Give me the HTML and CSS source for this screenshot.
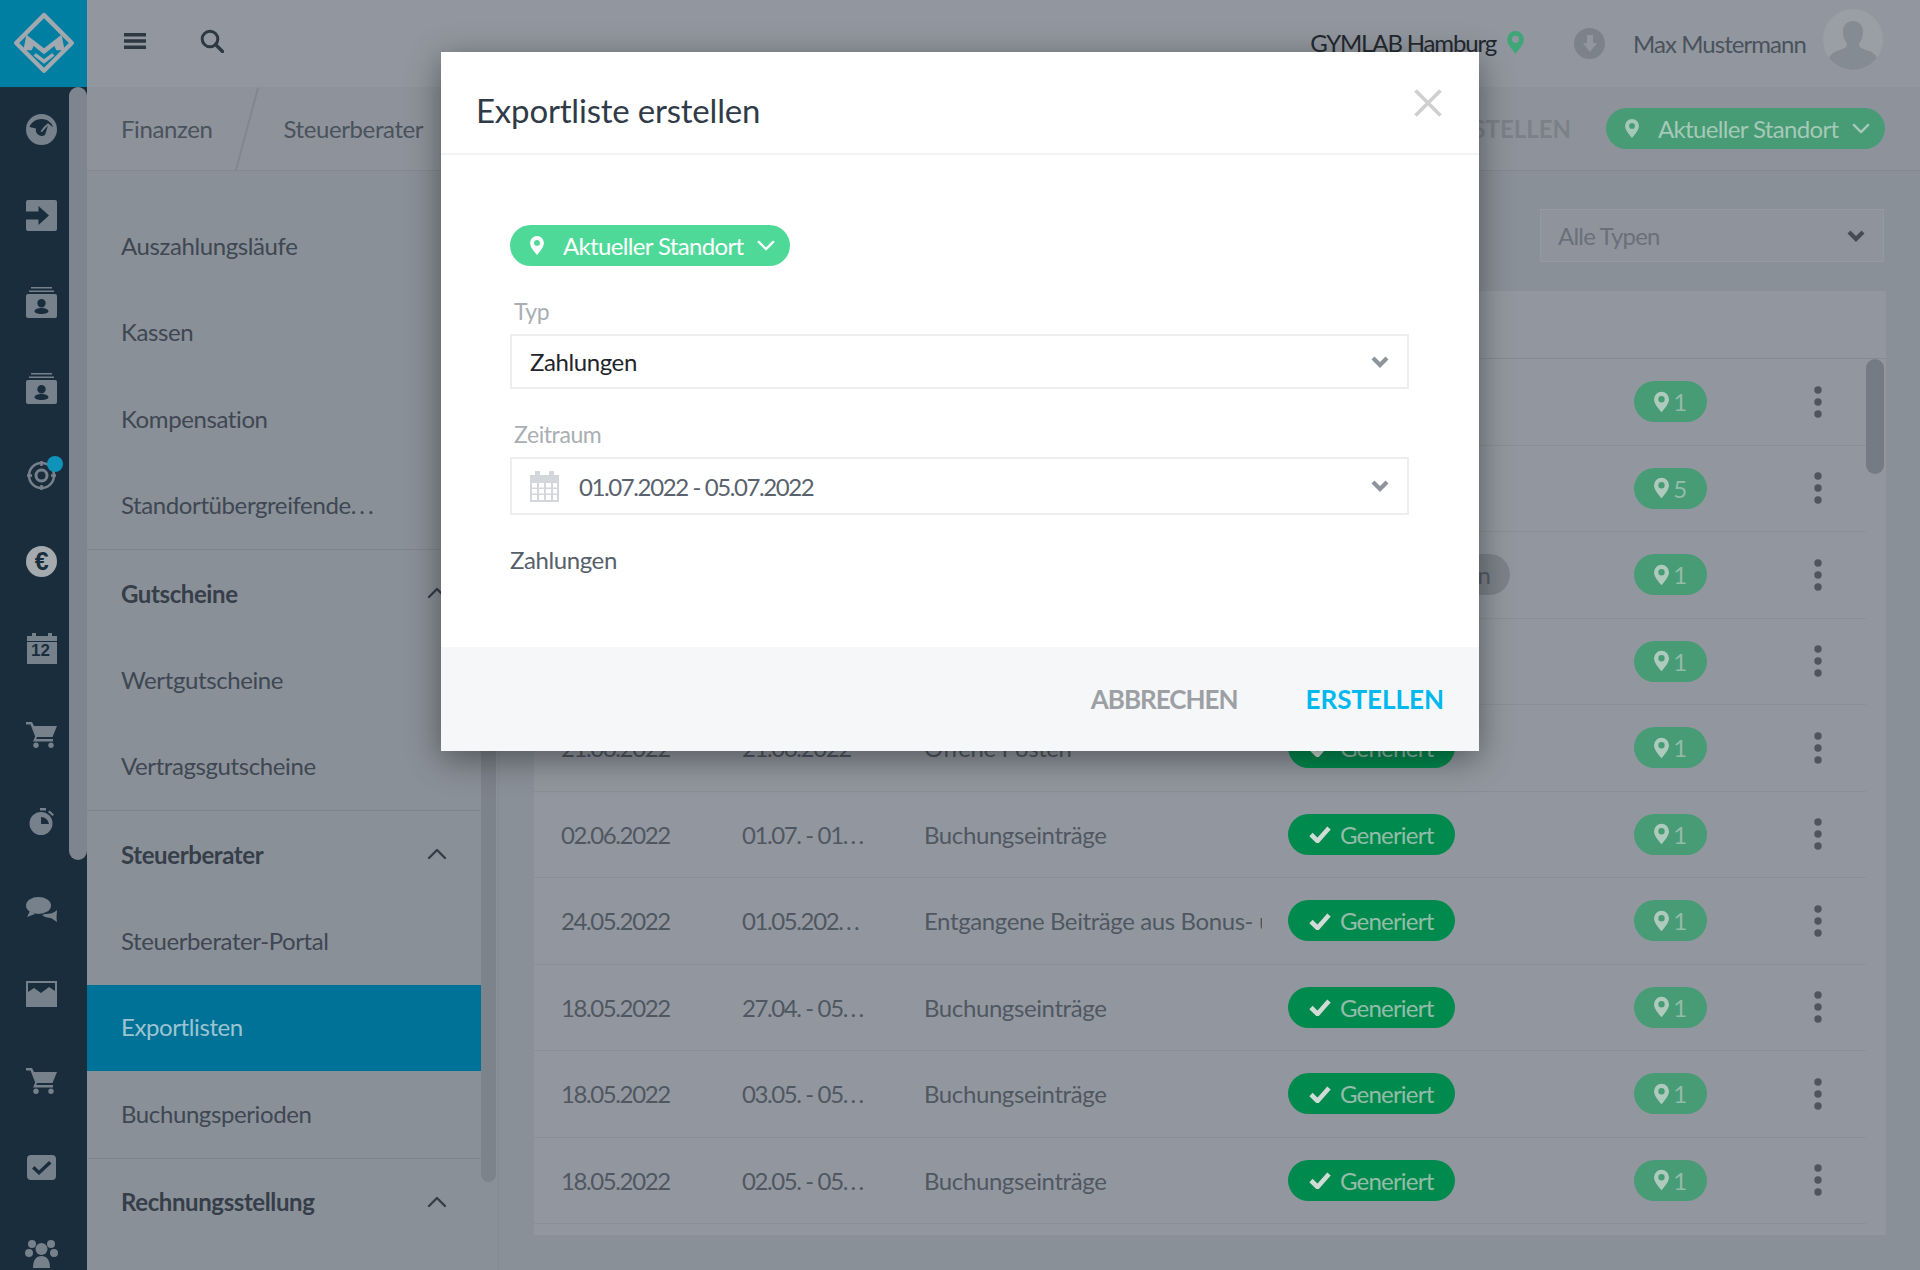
FILE: index.html
```html
<!DOCTYPE html>
<html lang="de">
<head>
<meta charset="utf-8">
<title>Exportliste erstellen</title>
<link rel="stylesheet" href="styles.css">
</head>
<body>
<svg class="defs" width="0" height="0" aria-hidden="true">
  <symbol id="pin" viewBox="0 0 16 22"><path fill-rule="evenodd" d="M8 0a8 8 0 0 1 8 8c0 5-5 10-8 14C5 18 0 13 0 8a8 8 0 0 1 8-8zm0 4.600a3.400 3.400 0 1 0 0 6.800 3.400 3.400 0 0 0 0-6.800z"/></symbol>
  <symbol id="chev" viewBox="0 0 20 12"><path d="M2 2l8 8 8-8" fill="none" stroke="currentColor" stroke-width="2.600" stroke-linecap="round" stroke-linejoin="round"/></symbol>
  <symbol id="chevb" viewBox="0 0 20 14"><path d="M3 3l7 7 7-7" fill="none" stroke="currentColor" stroke-width="4.200"/></symbol>
  <symbol id="up" viewBox="0 0 20 12"><path d="M2 10l8-8 8 8" fill="none" stroke="currentColor" stroke-width="2.400" stroke-linecap="round" stroke-linejoin="round"/></symbol>
  <symbol id="check" viewBox="0 0 22 18"><path d="M2 9.500l6.500 6.500L20 3" fill="none" stroke="currentColor" stroke-width="4.600"/></symbol>
  <symbol id="dots" viewBox="0 0 8 32"><circle cx="4" cy="4" r="3.700"/><circle cx="4" cy="16" r="3.700"/><circle cx="4" cy="28" r="3.700"/></symbol>
  <symbol id="boxperson" viewBox="0 0 31 31"><path d="M5 0h21v1.500H5zM3 3.500h25V5H3z"/><path fill-rule="evenodd" d="M2 7h27a2 2 0 0 1 2 2v20a2 2 0 0 1-2 2H2a2 2 0 0 1-2-2V9a2 2 0 0 1 2-2zm13.500 5a4.200 4.200 0 1 0 0 8.400 4.200 4.200 0 0 0 0-8.400zM15.500 21c-4 0-7 1.500-7 3.300 0 1.500 3 2.700 7 2.700s7-1.200 7-2.700c0-1.800-3-3.300-7-3.300z"/></symbol>
  <symbol id="cart" viewBox="0 0 31 26"><path d="M0 0h6l2 4h23l-4.500 11H11l-.8 2H27v2.500H7l2.200-5L4.500 2.500H0z"/><circle cx="10" cy="23.300" r="2.700"/><circle cx="25" cy="23.300" r="2.700"/></symbol>
</svg>

<div class="page">
  <nav class="rail">
    <div class="logo">
      <svg width="64" height="64" viewBox="0 0 62 62"><path d="M31 3l27 27-27 27L4 30z" fill="none" stroke="#a2a9ae" stroke-width="4.200" stroke-linejoin="round"/><path d="M14 22l17 13 17-13 3 15h-8l-2-4-10 8-10-8-2 4h-8z" fill="#a2a9ae"/><path d="M22 41l9 7 9-7" fill="none" stroke="#a2a9ae" stroke-width="3.500"/></svg>
    </div>
    <div class="rail-thumb"></div>
    <ul class="rail-list">
      <li><svg class="ic" width="31" height="31" viewBox="0 0 31 31"><path fill-rule="evenodd" d="M15.500 0a15.500 15.500 0 1 1 0 31 15.500 15.500 0 0 1 0-31zm0 5C9 5 4.500 9.500 3.500 13l6.500 1.500a6 6 0 0 0 9 6.500l3-9.500-6 6.500a3 3 0 0 0-1.500-.3c1.500-3 4-6 7.500-8.500l5 4C26 9.500 22 5 15.500 5z"/></svg></li>
      <li><svg class="ic" width="31" height="31" viewBox="0 0 31 31"><path fill-rule="evenodd" d="M2 0h27a2 2 0 0 1 2 2v27a2 2 0 0 1-2 2H2a2 2 0 0 1-2-2v-9.500h12.500V25L23 15.500 12.500 6v5.500H0V2a2 2 0 0 1 2-2z"/></svg></li>
      <li><svg class="ic" width="31" height="31"><use href="#boxperson"/></svg></li>
      <li><svg class="ic" width="31" height="31"><use href="#boxperson"/></svg></li>
      <li class="has-dot"><svg class="ic" width="29" height="29" viewBox="0 0 29 29"><circle cx="14.500" cy="14.500" r="12.500" fill="none" stroke="currentColor" stroke-width="2.500"/><circle cx="14.500" cy="14.500" r="5.500" fill="none" stroke="currentColor" stroke-width="3"/><path d="M14.500 0v5M14.500 24v5M0 14.500h5M24 14.500h5" stroke="currentColor" stroke-width="2.500"/></svg><span class="rail-dot"></span></li>
      <li><span class="euro">€</span></li>
      <li><svg class="ic" width="30" height="31" viewBox="0 0 30 31"><path d="M0 3h5V0h4v3h12V0h4v3h5v5H0zM0 9h30v22H0z"/></svg><span class="cal-num">12</span></li>
      <li><svg class="ic" width="31" height="26"><use href="#cart"/></svg></li>
      <li><svg class="ic" width="27" height="27" viewBox="0 0 27 27"><path fill-rule="evenodd" d="M12 0h6v2.500h-6zM13 4a11.500 11.500 0 1 1 0 23 11.500 11.500 0 0 1 0-23zm0 5v7h8a8 8 0 0 0-8-7z"/><path d="M21.500 2.500l4.500 4-1.500 1.500-4.500-4z"/></svg></li>
      <li><svg class="ic chat" width="31" height="25" viewBox="0 0 31 25"><ellipse cx="12.500" cy="8.500" rx="12.500" ry="8.500"/><path d="M4 14l-3 6 8-3zM19 17c5 0 9-1 12-4l-.5 8 .5 4-6-4c-3 0-7-1-9-3z"/></svg></li>
      <li><svg class="ic" width="31" height="26" viewBox="0 0 31 26"><path fill-rule="evenodd" d="M0 0h31v26H0zm2 2v9l6-4 7 5 8-6 6 4V2z"/></svg></li>
      <li><svg class="ic" width="31" height="26"><use href="#cart"/></svg></li>
      <li><svg class="ic" width="29" height="25" viewBox="0 0 29 25"><path fill-rule="evenodd" d="M4 0h21a4 4 0 0 1 4 4v17a4 4 0 0 1-4 4H4a4 4 0 0 1-4-4V4a4 4 0 0 1 4-4zm18 6L12 15.500 7.500 11 5 13.500l7 6.500L24.500 8.500z"/></svg></li>
      <li><svg class="ic" width="33" height="28" viewBox="0 0 33 28"><circle cx="7" cy="4" r="4"/><circle cx="26" cy="4" r="4"/><circle cx="16.500" cy="9" r="6"/><circle cx="4" cy="13" r="4"/><circle cx="29" cy="13" r="4"/><path d="M8 28c0-8 3-12 8.500-12S25 20 25 28z"/></svg></li>
    </ul>
  </nav>

  <div class="main">
    <header class="topbar">
      <div class="top-tools">
        <svg class="tool" width="22" height="18" viewBox="0 0 22 18"><path d="M0 1h22v3.400H0zM0 7.300h22v3.400H0zM0 13.600h22V17H0z"/></svg>
        <svg class="tool" width="24" height="24" viewBox="0 0 24 24"><circle cx="10" cy="10" r="7.800" fill="none" stroke="currentColor" stroke-width="3"/><path d="M15.500 15.500l7 7" stroke="currentColor" stroke-width="3.400" stroke-linecap="round"/></svg>
      </div>
      <div class="location">GYMLAB Hamburg <svg class="loc-pin" width="17" height="23"><use href="#pin"/></svg></div>
      <span class="download"><svg width="14" height="18" viewBox="0 0 14 18"><path d="M4 0h6v8h4l-7 9-7-9h4z"/></svg></span>
      <span class="user">Max Mustermann</span>
      <span class="avatar"><svg width="60" height="61" viewBox="0 0 60 61"><path d="M30 12c7 0 10 5 10 11 0 5-2 9-4 12 0 3 2 4 7 6 7 2 10 5 11 8a30 30 0 0 1-48 0c1-3 4-6 11-8 5-2 7-3 7-6-2-3-4-7-4-12 0-6 3-11 10-11z"/></svg></span>
    </header>

    <div class="tabbar">
      <a class="tab">Finanzen</a>
      <span class="tab-slash"></span>
      <a class="tab">Steuerberater</a>
      <span class="tab-action">ERSTELLEN</span>
      <span class="pill pill-dim"><svg class="pill-pin" width="14" height="19"><use href="#pin"/></svg>Aktueller Standort<svg class="pill-chev" width="18" height="11"><use href="#chev"/></svg></span>
    </div>

    <div class="body">
      <aside class="submenu">
        <a class="item">Auszahlungsläufe</a>
        <a class="item">Kassen</a>
        <a class="item">Kompensation</a>
        <a class="item"><span>Standortübergreifende<span class="ell side">...</span></span></a>
        <div class="section">Gutscheine<svg class="sec-chev" width="20" height="12"><use href="#up"/></svg></div>
        <a class="item">Wertgutscheine</a>
        <a class="item">Vertragsgutscheine</a>
        <div class="section">Steuerberater<svg class="sec-chev" width="20" height="12"><use href="#up"/></svg></div>
        <a class="item">Steuerberater-Portal</a>
        <a class="item active">Exportlisten</a>
        <a class="item">Buchungsperioden</a>
        <div class="section">Rechnungsstellung<svg class="sec-chev" width="20" height="12"><use href="#up"/></svg></div>
        <div class="sub-thumb"></div>
      </aside>

      <section class="content">
        <div class="filter-row">
          <div class="filter">Alle Typen<svg class="sel-chev" width="20" height="14"><use href="#chevb"/></svg></div>
        </div>
        <div class="panel">
          <div class="panel-head"></div>
          <div class="row"><span></span><span></span><span class="c-type"></span><span></span><span class="loc"><svg width="15" height="22"><use href="#pin"/></svg>1</span><svg class="dots" width="8" height="32"><use href="#dots"/></svg></div>
          <div class="row"><span></span><span></span><span class="c-type"></span><span></span><span class="loc"><svg width="15" height="22"><use href="#pin"/></svg>5</span><svg class="dots" width="8" height="32"><use href="#dots"/></svg></div>
          <div class="row"><span></span><span></span><span class="c-type"></span><span class="status grey">Fehlgeschlagen</span><span class="loc"><svg width="15" height="22"><use href="#pin"/></svg>1</span><svg class="dots" width="8" height="32"><use href="#dots"/></svg></div>
          <div class="row"><span></span><span></span><span class="c-type"></span><span></span><span class="loc"><svg width="15" height="22"><use href="#pin"/></svg>1</span><svg class="dots" width="8" height="32"><use href="#dots"/></svg></div>
          <div class="row"><span>21.06.2022</span><span>21.06.2022</span><span class="c-type">Offene Posten</span><span class="status"><svg width="22" height="18"><use href="#check"/></svg>Generiert</span><span class="loc"><svg width="15" height="22"><use href="#pin"/></svg>1</span><svg class="dots" width="8" height="32"><use href="#dots"/></svg></div>
          <div class="row"><span>02.06.2022</span><span>01.07. - 01<span class="ell">...</span></span><span class="c-type">Buchungseinträge</span><span class="status"><svg width="22" height="18"><use href="#check"/></svg>Generiert</span><span class="loc"><svg width="15" height="22"><use href="#pin"/></svg>1</span><svg class="dots" width="8" height="32"><use href="#dots"/></svg></div>
          <div class="row"><span>24.05.2022</span><span>01.05.202<span class="ell">...</span></span><span class="c-type">Entgangene Beiträge aus Bonus- und</span><span class="status"><svg width="22" height="18"><use href="#check"/></svg>Generiert</span><span class="loc"><svg width="15" height="22"><use href="#pin"/></svg>1</span><svg class="dots" width="8" height="32"><use href="#dots"/></svg></div>
          <div class="row"><span>18.05.2022</span><span>27.04. - 05<span class="ell">...</span></span><span class="c-type">Buchungseinträge</span><span class="status"><svg width="22" height="18"><use href="#check"/></svg>Generiert</span><span class="loc"><svg width="15" height="22"><use href="#pin"/></svg>1</span><svg class="dots" width="8" height="32"><use href="#dots"/></svg></div>
          <div class="row"><span>18.05.2022</span><span>03.05. - 05<span class="ell">...</span></span><span class="c-type">Buchungseinträge</span><span class="status"><svg width="22" height="18"><use href="#check"/></svg>Generiert</span><span class="loc"><svg width="15" height="22"><use href="#pin"/></svg>1</span><svg class="dots" width="8" height="32"><use href="#dots"/></svg></div>
          <div class="row"><span>18.05.2022</span><span>02.05. - 05<span class="ell">...</span></span><span class="c-type">Buchungseinträge</span><span class="status"><svg width="22" height="18"><use href="#check"/></svg>Generiert</span><span class="loc"><svg width="15" height="22"><use href="#pin"/></svg>1</span><svg class="dots" width="8" height="32"><use href="#dots"/></svg></div>
          <div class="table-thumb"></div>
        </div>
      </section>
    </div>
  </div>

  <div class="modal">
    <div class="modal-head">
      <h2>Exportliste erstellen</h2>
      <svg class="close" width="28" height="28" viewBox="0 0 28 28"><path d="M1.500 1.500l25 25M26.500 1.500l-25 25" stroke="currentColor" stroke-width="3.600"/></svg>
    </div>
    <div class="modal-body">
      <span class="pill pill-bright"><svg class="pill-pin" width="14" height="19"><use href="#pin"/></svg>Aktueller Standort<svg class="pill-chev" width="18" height="11"><use href="#chev"/></svg></span>
      <label class="f-label">Typ</label>
      <div class="select select-typ">Zahlungen<svg class="sel-chev" width="20" height="14"><use href="#chevb"/></svg></div>
      <label class="f-label">Zeitraum</label>
      <div class="select select-date">
        <svg class="cal" width="29" height="31" viewBox="0 0 29 31"><path fill-rule="evenodd" d="M0 4h5V0h5v4h9V0h5v4h5v27H0zm2 8v4.500h5V12zm7 0v4.500h5V12zm7 0v4.500h5V12zm7 0v4.500h4V12zM2 18v4.500h5V18zm7 0v4.500h5V18zm7 0v4.500h5V18zm7 0v4.500h4V18zM2 24v5h5v-5zm7 0v5h5v-5zm7 0v5h5v-5zm7 0v5h4v-5z"/></svg>
        <span class="date-text">01.07.2022 - 05.07.2022</span>
        <svg class="sel-chev" width="20" height="14"><use href="#chevb"/></svg>
      </div>
      <p class="hint">Zahlungen</p>
    </div>
    <div class="modal-foot">
      <button class="btn btn-cancel" type="button">ABBRECHEN</button>
      <button class="btn btn-ok" type="button">ERSTELLEN</button>
    </div>
  </div>
</div>
</body>
</html>
```

FILE: styles.css
```css
* { box-sizing: border-box; }
html, body { margin: 0; padding: 0; }
body { font-family: "Lato", "Noto Sans", sans-serif; font-size: 24px; letter-spacing: -.4px; background: #8a9098; overflow: hidden; }
.defs { position: absolute; }
.page { width: 1920px; height: 1270px; display: flex; overflow: hidden; position: relative; }

/* left rail */
.rail { width: 87px; flex: none; background: #1a2d3c; position: relative; overflow: hidden; }
.logo { height: 87px; background: #007fa3; display: flex; align-items: center; justify-content: center; padding: 0 4px 0 4px; }
.rail-thumb { position: absolute; left: 69px; top: 87px; width: 18px; height: 773px; background: #7f858e; border-radius: 9px; }
.rail-list { list-style: none; margin: -1px 0 0; padding: 0; width: 83px; }
.rail-list li { height: 86.5px; display: flex; align-items: center; justify-content: center; position: relative; color: #77818b; fill: #77818b; }
.ic { display: block; }
.chat { margin-top: 4px; }
.rail-dot { position: absolute; left: 47px; top: 24px; width: 16px; height: 16px; border-radius: 50%; background: #0f93bb; }
.euro { width: 31px; height: 31px; border-radius: 50%; background: #a5aaaf; color: #1a2d3c; font: 700 25px/31px "Liberation Sans", sans-serif; text-align: center; }
.cal-num { position: absolute; left: 31px; top: 36px; font: 700 17px/20px "Liberation Sans", sans-serif; letter-spacing: 0; color: #1a2d3c; }

/* main */
.main { flex: 1; min-width: 0; display: flex; flex-direction: column; }
.topbar { height: 87px; flex: none; background: #92979f; display: flex; align-items: center; padding-right: 37px; }
.top-tools { display: flex; align-items: center; gap: 54px; padding-left: 37px; margin-top: -5px; flex: 1; color: #2e3843; fill: #2e3843; }
.tool { display: block; }
.location { position: relative; z-index: 5; color: #20262c; letter-spacing: -1.15px; display: flex; align-items: center; gap: 11px; line-height: 30px; margin-top: -1px; }
.loc-pin { fill: #3fa677; margin-top: -2px; }
.download { width: 31px; height: 31px; border-radius: 50%; background: #7c828a; margin-left: 50px; display: flex; align-items: center; justify-content: center; fill: #92979f; }
.user { margin-left: 28px; margin-top: -1px; letter-spacing: -.95px; color: #4a525c; }
.avatar { width: 60px; height: 61px; border-radius: 50%; background: #9a9fa6; margin-left: 17px; margin-top: -8px; overflow: hidden; fill: #858b92; }

.tabbar { height: 84px; flex: none; background: #8e939b; border-bottom: 1px solid #838991; display: flex; align-items: center; padding: 0 35px 0 34px; position: relative; }
.tab { color: #4a525c; }
.tab-slash { width: 2px; height: 86px; background: #82878f; transform: rotate(15deg); margin: 0 35px 0 34px; }
.tab-action { margin-left: auto; color: #7b8189; font-weight: 700; letter-spacing: 0; margin-right: 35px; }
.pill { display: inline-flex; align-items: center; height: 41px; border-radius: 21px; color: #fff; flex: none; letter-spacing: -.65px; }
.pill-dim { width: 279px; background: #479b75; color: #a5c9b8; padding-left: 19px; fill: #a5c9b8; }
.pill-bright { width: 280px; background: #4fd998; fill: #fff; padding-left: 20px; }
.pill-pin { margin-right: 19px; }
.pill-chev { margin-left: 13px; }

.body { flex: 1; display: flex; min-height: 0; }
.submenu { width: 412px; flex: none; padding: 32px 17px 0 0; background: #8a9098; border-right: 1px solid #858b93; position: relative; }
.item { display: flex; align-items: center; height: 86.5px; padding: 0 0 2px 34px; color: #3f4752; }
.item.active { background: #007298; color: #9cc3d0; }
.section { display: flex; align-items: center; justify-content: space-between; height: 88px; padding: 0 34px 1px 34px; color: #363e49; font-weight: 700; border-top: 1px solid #7f858d; }
.sec-chev { color: #363e49; }
.sub-thumb { position: absolute; left: 394px; top: 0; width: 15px; height: 1011px; border-radius: 8px; background: #7d838b; }

.content { flex: 1; min-width: 0; padding: 0 34px 0 35px; }
.filter-row { height: 120px; padding: 38px 2px 0 0; display: flex; justify-content: flex-end; }
.filter { width: 344px; height: 53px; background: #8f949c; border: 1px solid #959aa1; color: #6a7079; letter-spacing: -.8px; display: flex; align-items: center; justify-content: space-between; padding: 0 17px 0 17px; }
.filter .sel-chev { color: #454c55; }
.panel { position: relative; background: #92979f; height: 944px; }
.panel-head { height: 68px; border-bottom: 1px solid #868b93; }
.row { height: 86.5px; width: 1332px; padding-left: 27px; border-bottom: 1px solid #8a8f97; display: grid; grid-template-columns: 181px 182px 364px 346px 73px 1fr; align-items: center; color: #505761; }
.row > span:nth-child(-n+2) { letter-spacing: -1.4px; }
.row .ell { letter-spacing: 2.2px; }
.item .ell.side { letter-spacing: 3px; }
.c-type { width: 338px; overflow: hidden; white-space: nowrap; }
.status { width: 167px; height: 41px; border-radius: 21px; background: #008a4e; color: #93bca8; letter-spacing: -.8px; display: inline-flex; align-items: center; padding-left: 21px; gap: 9px; fill: none; }
.status svg { color: #d0dbd5; flex: none; }
.status.grey { width: 222px; background: #7d828a; color: #555c65; justify-content: flex-end; padding: 0 20px 0 0; }
.loc { width: 73px; height: 41px; border-radius: 21px; background: #479b75; color: #93bca8; fill: #aecabd; display: inline-flex; align-items: center; justify-content: center; gap: 4px; }
.dots { justify-self: start; margin-left: 107px; fill: #4e555f; }
.table-thumb { position: absolute; left: 1332px; top: 68px; width: 18px; height: 115px; border-radius: 9px; background: #757b85; }

/* modal */
.modal { position: absolute; z-index: 3; left: 441px; top: 52px; width: 1038px; height: 699px; background: #fff; display: flex; flex-direction: column; box-shadow: 0 8px 32px rgba(0, 0, 0, .42); }
.modal-head { height: 103px; flex: none; border-bottom: 2px solid #f2f3f5; display: flex; align-items: center; justify-content: space-between; padding: 0 37px 0 35px; }
.modal-head h2 { margin: 0; font-size: 33px; font-weight: 400; letter-spacing: -.2px; color: #2f3b47; padding-top: 14px; }
.close { color: #cfcfcf; margin-top: 1px; }
.modal-body { flex: 1; padding: 70px 69px 0; display: flex; flex-direction: column; align-items: flex-start; }
.f-label { display: block; margin: 28px 0 6px 4px; line-height: 34px; color: #a9aeb3; font-size: 23px; }
.select { width: 899px; background: #fff; border: 2px solid #eceef0; display: flex; align-items: center; color: #1f252b; padding: 0 17px 0 18px; }
.select-typ { height: 55px; justify-content: space-between; }
.select-date { height: 58px; color: #59626d; }
.select .sel-chev { color: #8e949b; }
.cal { fill: #d3d7db; flex: none; }
.date-text { flex: 1; margin-left: 20px; letter-spacing: -1.4px; }
.hint { margin: 29px 0 0; line-height: 32px; color: #56606b; }
.modal-foot { height: 104px; flex: none; background: #f6f7f9; display: flex; align-items: center; justify-content: flex-end; gap: 68px; padding-right: 35px; }
.btn { border: 0; background: none; padding: 0; font: 700 26px/32px "Lato", sans-serif; }
.btn-cancel { color: #9ca0a5; letter-spacing: -1px; }
.btn-ok { color: #00b8ee; }
```
